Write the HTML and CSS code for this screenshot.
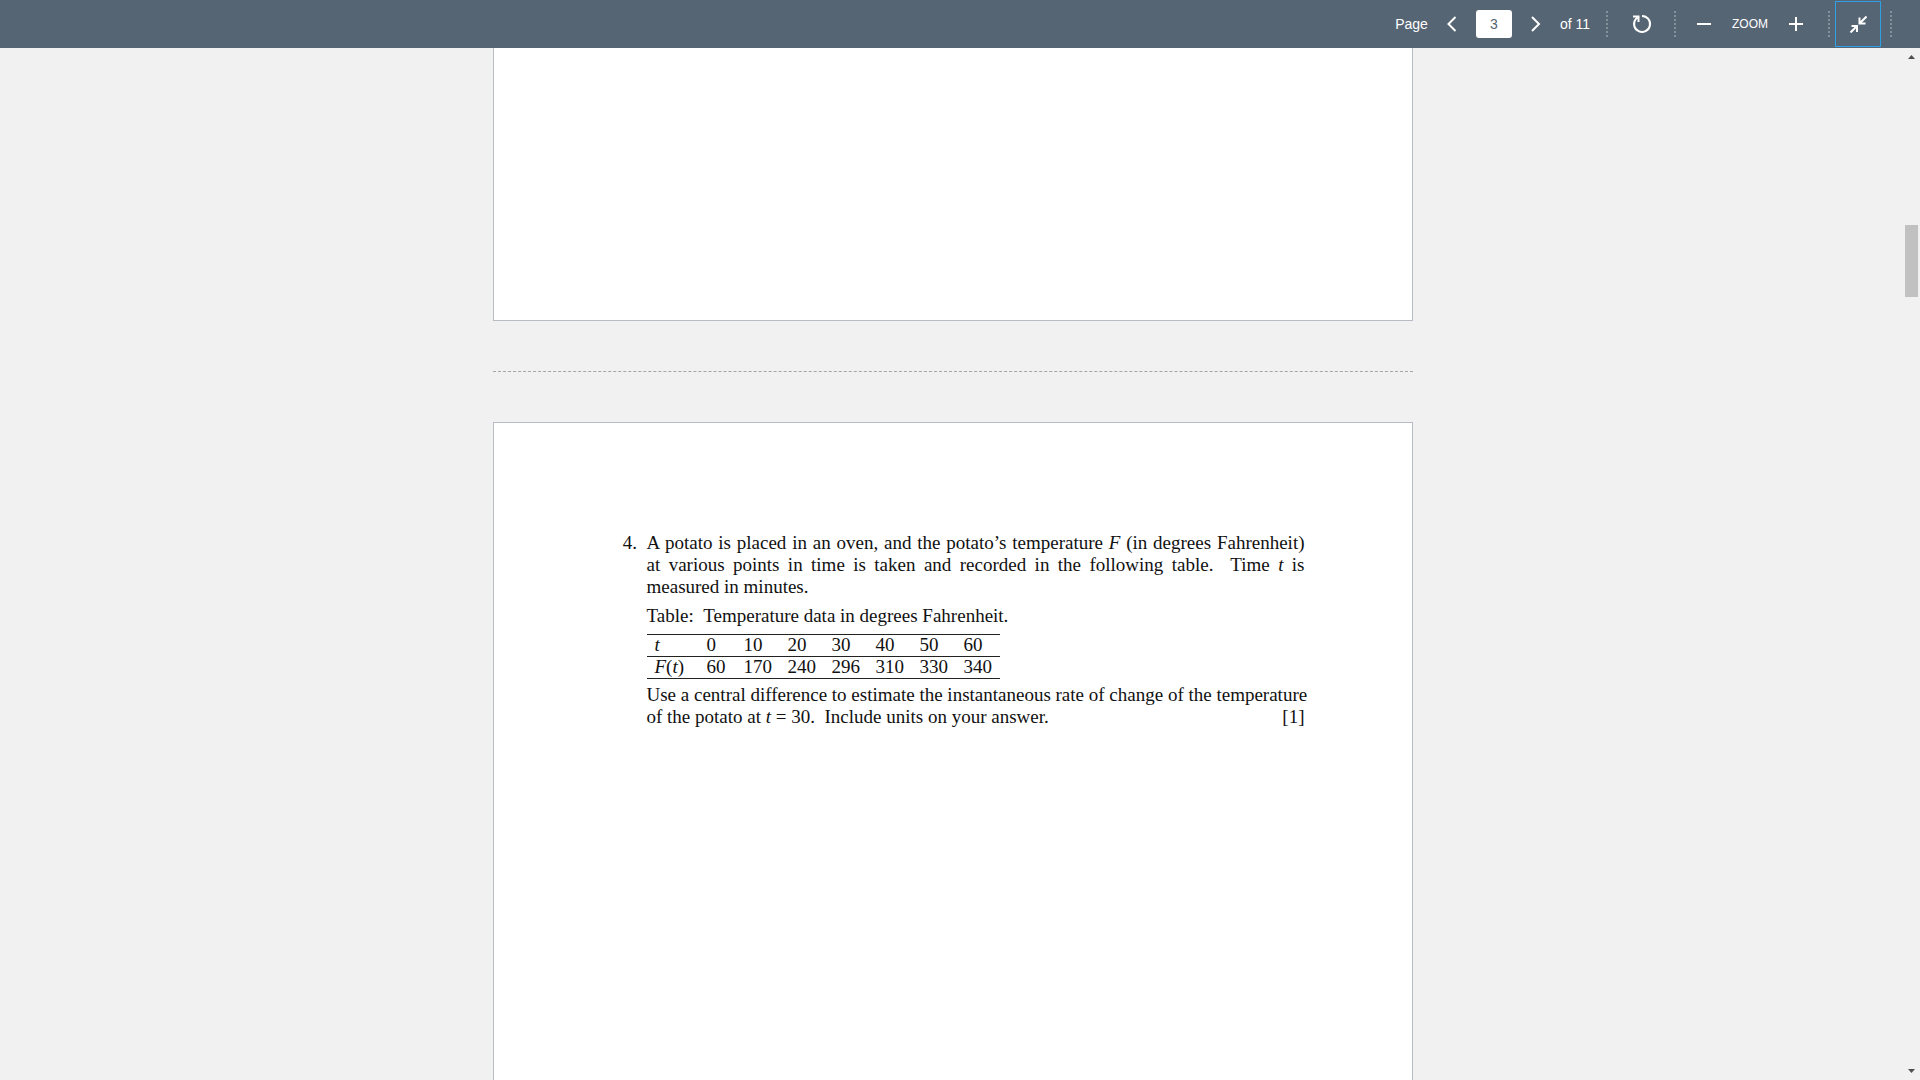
FILE: index.html
```html
<!DOCTYPE html>
<html lang="en">
	<head>
		<meta charset="UTF-8" />
		<meta name="viewport" content="width=device-width, initial-scale=1.0" />
		<title>Document Viewer</title>
		<link rel="stylesheet" href="styles.css">
	</head>
	<body>
		<header class="toolbar">
			<div class="group pager">
				<label for="page-number">Page</label>
				<button type="button" class="tool" aria-label="Previous page">
					<svg viewBox="0 0 16 16"><path d="M11.5 1l-7 7 7 7" /></svg>
				</button>
				<input id="page-number" type="text" value="3" />
				<button type="button" class="tool" aria-label="Next page">
					<svg viewBox="0 0 16 16"><path d="M4 1l7 7-7 7" /></svg>
				</button>
				<span class="total">of 11</span>
			</div>
			<div class="group rotate">
				<button type="button" class="tool large" aria-label="Rotate">
					<svg viewBox="0 0 20 20"><path d="M10 2A8 8 0 1 1 3.8 5L6 3" /><path d="M1 2.5h5.5V8" /></svg>
				</button>
			</div>
			<div class="group zoom">
				<button type="button" class="tool" aria-label="Zoom out">
					<svg viewBox="0 0 16 16"><path d="M1 8h14" /></svg>
				</button>
				<span class="zoom-label">ZOOM</span>
				<button type="button" class="tool" aria-label="Zoom in">
					<svg viewBox="0 0 16 16"><path d="M1 8h14M8 1v14" /></svg>
				</button>
			</div>
			<div class="group screen">
				<button type="button" class="shrink" aria-label="Exit full screen">
					<svg viewBox="0 0 18 18"><path d="M17.5 1.5L11 8M10.5 2.5v6h6M1.5 17.5L8 11M2.5 11H8v6" /></svg>
				</button>
			</div>
		</header>
		<div class="viewer">
			<main class="pages">
				<section class="page previous"></section>
				<hr />
				<section class="page current">
					<ol start="4">
						<li>
							<p>
								<span class="line">A potato is placed in an oven, and the potato’s temperature <i>F</i> (in degrees Fahrenheit)</span>
								<span class="line">at various points in time is taken and recorded in the following table. &nbsp;Time <i>t</i> is</span>
								measured in minutes.
							</p>
							<p class="caption" id="table-title">Table: &nbsp;Temperature data in degrees Fahrenheit.</p>
							<table aria-labelledby="table-title">
								<tr>
									<th class="name"><i>t</i></th>
									<td class="first">0</td>
									<td>10</td>
									<td>20</td>
									<td>30</td>
									<td>40</td>
									<td>50</td>
									<td>60</td>
								</tr>
								<tr>
									<th class="name"><i>F</i>(<i>t</i>)</th>
									<td>60</td>
									<td>170</td>
									<td>240</td>
									<td>296</td>
									<td>310</td>
									<td>330</td>
									<td>340</td>
								</tr>
							</table>
							<p>
								<span class="line">Use a central difference to estimate the instantaneous rate of change of the temperature</span>
								<span class="answer"><span>of the potato at <i>t</i> = 30. &nbsp;Include units on your answer.</span><span>[1]</span></span>
							</p>
						</li>
					</ol>
				</section>
			</main>
			<div class="scrollbar">
				<svg viewBox="0 0 7 4"><path d="M0 4l3.5-4L7 4z" /></svg>
				<div class="track"><div class="thumb"></div></div>
				<svg viewBox="0 0 7 4"><path d="M0 0l3.5 4L7 0z" /></svg>
			</div>
		</div>
	</body>
</html>
```

FILE: styles.css
```css
* {
	box-sizing: border-box;
}
body {
	margin: 0;
	height: 100vh;
	display: flex;
	flex-direction: column;
	overflow: hidden;
	background: #f1f1f1;
	font-family: 'Liberation Sans', Arial, sans-serif;
}
.toolbar {
	flex: none;
	height: 48px;
	display: flex;
	justify-content: flex-end;
	align-items: center;
	padding-right: 28px;
	background: #566573;
	color: #fff;
	font-size: 14px;
}
.group {
	height: 26px;
	display: flex;
	align-items: center;
	justify-content: center;
	border-right: 2px dotted #84909a;
}
.pager {
	padding-right: 16px;
}
.rotate {
	width: 68px;
	padding-left: 2px;
}
.zoom {
	width: 154px;
	justify-content: flex-end;
	gap: 18px;
	padding-right: 22px;
}
.screen {
	width: 62px;
	padding-right: 4px;
}
.tool,
.shrink {
	display: flex;
	align-items: center;
	justify-content: center;
	width: 20px;
	height: 26px;
	padding: 0;
	border: none;
	background: none;
	cursor: pointer;
}
.toolbar svg {
	width: 16px;
	height: 16px;
	fill: none;
	stroke: #fff;
	stroke-width: 2;
}
.toolbar .large svg {
	width: 20px;
	height: 20px;
}
.shrink {
	flex: none;
	width: 46px;
	height: 46px;
	border: 1px solid #2f9fe6;
}
.toolbar .shrink svg {
	width: 18px;
	height: 18px;
}
.pager .tool {
	margin: 0 14px;
}
.pager input {
	width: 36px;
	height: 28px;
	padding: 0;
	border: none;
	border-radius: 3px;
	background: #fff;
	color: #566573;
	font: 14px 'Liberation Sans', Arial, sans-serif;
	text-align: center;
}
.zoom-label {
	font-size: 12px;
}
.viewer {
	flex: 1;
	min-height: 0;
	display: flex;
}
.pages {
	flex: 1;
	display: flex;
	flex-direction: column;
	align-items: center;
	overflow: hidden;
}
.page {
	flex: none;
	width: 920px;
	max-width: 100%;
	border: 1px solid #b8bcc4;
	background: #fff;
}
.previous {
	height: 273px;
	border-top: none;
}
.current {
	min-height: 1190px;
	padding: 109px 107px 0 153px;
	color: #111;
	font: 19px/22px 'Liberation Serif', 'Times New Roman', serif;
}
hr {
	width: 920px;
	max-width: 100%;
	margin: 50px 0;
	border: none;
	border-top: 1px dashed #a3a6a3;
}
ol {
	margin: 0;
	padding: 0;
}
li::marker {
	content: counter(list-item) '.\00a0\00a0';
}
p {
	margin: 0;
}
.line {
	display: block;
	text-align-last: justify;
	white-space: nowrap;
}
.answer {
	display: flex;
	justify-content: space-between;
}
.caption {
	margin: 7px 0;
}
table {
	width: 353px;
	margin-bottom: 5px;
	table-layout: fixed;
	border-collapse: collapse;
	border-bottom: 1px solid #222;
}
tr {
	border-top: 1px solid #222;
}
th,
td {
	height: 22px;
	padding: 0 0 2px 8px;
	font-weight: normal;
	line-height: 19px;
	text-align: left;
}
.name {
	width: 52px;
}
.first {
	width: 37px;
}
.scrollbar {
	flex: none;
	width: 15px;
	display: flex;
	flex-direction: column;
	align-items: center;
	padding: 7px 0;
}
.scrollbar svg {
	width: 7px;
	height: 4px;
	margin-right: 2px;
	fill: #505050;
}
.track {
	flex: 1;
	width: 13px;
	padding-top: 166px;
	margin-right: 2px;
}
.thumb {
	height: 72px;
	background: #c1c1c1;
}
```
